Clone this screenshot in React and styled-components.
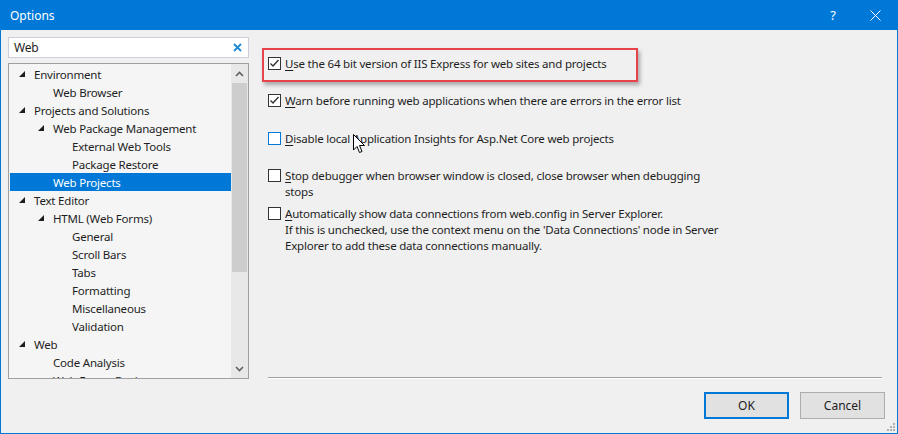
import styled, { createGlobalStyle } from 'styled-components'

const GlobalStyle = createGlobalStyle`
    html, body {
        margin: 0;
        padding: 0;
        background: #f0f0f0;
    }
    * {
        box-sizing: border-box;
    }
`

const Window = styled.div`
    width: 898px;
    height: 434px;
    display: flex;
    flex-direction: column;
    border: 1px solid #0078d7;
    border-top: none;
    background: #f0f0f0;
    font-family: 'Noto Sans', 'Open Sans', sans-serif;
    font-size: 11.5px;
    letter-spacing: -0.2px;
    color: #1e1e1e;
    position: relative;
    overflow: hidden;
`

const TitleBar = styled.div`
    height: 30px;
    margin: 0 -1px;
    background: #0078d7;
    color: white;
    display: flex;
    align-items: center;
    padding-left: 10px;
    padding-right: 5px;
`

const Title = styled.div`
    flex: 1;
    font-size: 12px;
    letter-spacing: 0;
`

const TitleButton = styled.div`
    width: 36px;
    height: 30px;
    margin-right: ${(p) => p.$space || 0}px;
    display: flex;
    align-items: center;
    justify-content: center;
    font-size: 13px;
`

const Content = styled.div`
    flex: 1;
    display: flex;
    flex-direction: column;
    padding: 7px 12px 0 7px;
`

const Main = styled.div`
    display: flex;
    height: 342px;
`

const LeftPanel = styled.div`
    width: 241px;
    display: flex;
    flex-direction: column;
    gap: 5px;
`

const SearchBox = styled.div`
    height: 21px;
    border: 1px solid #cccedb;
    background: white;
    display: flex;
    align-items: center;
    padding: 0 6px 0 5px;
    font-size: 12px;
`

const SearchText = styled.div`
    flex: 1;
`

const Tree = styled.div`
    flex: 1;
    border: 1px solid #a0a0a0;
    background: #f5f5f5;
    display: flex;
    overflow: hidden;
`

const TreeList = styled.div`
    flex: 1;
    padding: 1px 0 0 1px;
    overflow: hidden;
`

const TreeRow = styled.div`
    height: 18px;
    display: flex;
    align-items: center;
    padding-left: ${(p) => 9 + (p.$level - 1) * 19}px;
    background: ${(p) => (p.$selected ? '#0078d7' : 'transparent')};
    color: ${(p) => (p.$selected ? 'white' : '#1e1e1e')};
    white-space: nowrap;
`

const Expander = styled.div`
    width: 15px;
    height: 18px;
    display: flex;
    align-items: center;
    padding-bottom: 1px;
`

const ScrollBar = styled.div`
    width: 17px;
    background: #e8e8e8;
    display: flex;
    flex-direction: column;
    align-items: center;
`

const ScrollArrow = styled.div`
    height: 19px;
    width: 100%;
    display: flex;
    align-items: center;
    justify-content: center;
`

const ScrollTrack = styled.div`
    flex: 1;
    width: 100%;
`

const ScrollThumb = styled.div`
    height: 189px;
    margin: 0 1px;
    background: #cdcdcd;
`

const RightPanel = styled.div`
    flex: 1;
    margin-left: 19px;
    display: flex;
    flex-direction: column;
`

const Options = styled.div`
    flex: 1;
    padding-top: 19px;
    display: flex;
    flex-direction: column;
`

const OptionRow = styled.div`
    position: relative;
    display: flex;
    align-items: flex-start;
    margin-top: ${(p) => p.$gap}px;
    line-height: 16px;
`

const CheckBox = styled.div`
    width: 13px;
    height: 13px;
    margin-top: 1px;
    margin-right: 4px;
    flex-shrink: 0;
    border: 1px solid ${(p) => (p.$focus ? '#0078d7' : '#333333')};
    background: white;
    display: flex;
    align-items: center;
    justify-content: center;
`

const Label = styled.div`
    max-width: ${(p) => p.$width}px;
`

const Key = styled.span`
    text-decoration: underline;
    text-underline-offset: 2px;
`

const Highlight = styled.div`
    position: absolute;
    left: -6px;
    top: -8px;
    width: 376px;
    height: 34px;
    border: 2px solid #e8434b;
    box-shadow: 2px 3px 4px rgba(0, 0, 0, 0.3);
    pointer-events: none;
`

const Separator = styled.div`
    height: 2px;
    margin-right: 3px;
    border-top: 1px solid #a0a0a0;
    border-bottom: 1px solid #ffffff;
`

const Footer = styled.div`
    display: flex;
    justify-content: flex-end;
    gap: 11px;
    padding-top: 13px;
`

const Button = styled.div`
    width: 85px;
    height: 27px;
    display: flex;
    align-items: center;
    justify-content: center;
    font-size: 12px;
    letter-spacing: 0;
    background: #e1e1e1;
    border: ${(p) => (p.$default ? '2px solid #0078d7' : '1px solid #adadad')};
`

const Cursor = styled.svg`
    position: absolute;
    left: 352px;
    top: 134px;
`

const Grip = styled.svg`
    position: absolute;
    right: 2px;
    bottom: 2px;
`

const Triangle = () => (
    <svg width="6" height="6" viewBox="0 0 6 6">
        <polygon points="6,0 6,6 0,6" fill="#1e1e1e" />
    </svg>
)

const Check = () => (
    <svg width="11" height="11" viewBox="0 0 11 11">
        <polyline points="1.5,5.5 4,8 9.5,2" fill="none" stroke="#333" strokeWidth="1.4" />
    </svg>
)

const treeItems = [
    { label: 'Environment', level: 1, open: true },
    { label: 'Web Browser', level: 2 },
    { label: 'Projects and Solutions', level: 1, open: true },
    { label: 'Web Package Management', level: 2, open: true },
    { label: 'External Web Tools', level: 3 },
    { label: 'Package Restore', level: 3 },
    { label: 'Web Projects', level: 2, selected: true },
    { label: 'Text Editor', level: 1, open: true },
    { label: 'HTML (Web Forms)', level: 2, open: true },
    { label: 'General', level: 3 },
    { label: 'Scroll Bars', level: 3 },
    { label: 'Tabs', level: 3 },
    { label: 'Formatting', level: 3 },
    { label: 'Miscellaneous', level: 3 },
    { label: 'Validation', level: 3 },
    { label: 'Web', level: 1, open: true },
    { label: 'Code Analysis', level: 2 },
    { label: 'Web Forms Designer', level: 2 },
]

const options = [
    {
        key: 'U',
        rest: 'se the 64 bit version of IIS Express for web sites and projects',
        checked: true,
        gap: 0,
        width: 460,
        highlight: true,
    },
    {
        key: 'W',
        rest: 'arn before running web applications when there are errors in the error list',
        checked: true,
        gap: 21,
        width: 460,
    },
    {
        key: 'D',
        rest: 'isable local Application Insights for Asp.Net Core web projects',
        focus: true,
        gap: 22,
        width: 460,
    },
    {
        key: 'S',
        rest: 'top debugger when browser window is closed, close browser when debugging stops',
        gap: 21,
        width: 428,
    },
    {
        key: 'A',
        rest: 'utomatically show data connections from web.config in Server Explorer.',
        extra: "If this is unchecked, use the context menu on the 'Data Connections' node in Server Explorer to add these data connections manually.",
        gap: 6,
        width: 462,
    },
]

const App = () => {
    return (
        <Window>
            <GlobalStyle />
            <TitleBar>
                <Title>Options</Title>
                <TitleButton $space={6}>?</TitleButton>
                <TitleButton>
                    <svg width="11" height="11" viewBox="0 0 11 11">
                        <path d="M0.5 0.5 L10.5 10.5 M10.5 0.5 L0.5 10.5" stroke="white" strokeWidth="1" />
                    </svg>
                </TitleButton>
            </TitleBar>
            <Content>
                <Main>
                    <LeftPanel>
                        <SearchBox>
                            <SearchText>Web</SearchText>
                            <svg width="9" height="9" viewBox="0 0 9 9">
                                <path d="M1 1 L8 8 M8 1 L1 8" stroke="#1e88d8" strokeWidth="1.8" />
                            </svg>
                        </SearchBox>
                        <Tree>
                            <TreeList>
                                {treeItems.map((item) => (
                                    <TreeRow key={item.label} $level={item.level} $selected={item.selected}>
                                        <Expander>{item.open && <Triangle />}</Expander>
                                        {item.label}
                                    </TreeRow>
                                ))}
                            </TreeList>
                            <ScrollBar>
                                <ScrollArrow>
                                    <svg width="9" height="6" viewBox="0 0 9 6">
                                        <polyline points="1,5 4.5,1.5 8,5" fill="none" stroke="#606060" strokeWidth="1.6" />
                                    </svg>
                                </ScrollArrow>
                                <ScrollTrack>
                                    <ScrollThumb />
                                </ScrollTrack>
                                <ScrollArrow>
                                    <svg width="9" height="6" viewBox="0 0 9 6">
                                        <polyline points="1,1 4.5,4.5 8,1" fill="none" stroke="#606060" strokeWidth="1.6" />
                                    </svg>
                                </ScrollArrow>
                            </ScrollBar>
                        </Tree>
                    </LeftPanel>
                    <RightPanel>
                        <Options>
                            {options.map((opt) => (
                                <OptionRow key={opt.key} $gap={opt.gap}>
                                    {opt.highlight && <Highlight />}
                                    <CheckBox $focus={opt.focus}>{opt.checked && <Check />}</CheckBox>
                                    <Label $width={opt.width}>
                                        <Key>{opt.key}</Key>
                                        {opt.rest}
                                        {opt.extra && <div>{opt.extra}</div>}
                                    </Label>
                                </OptionRow>
                            ))}
                        </Options>
                        <Separator />
                    </RightPanel>
                </Main>
                <Footer>
                    <Button $default>OK</Button>
                    <Button>Cancel</Button>
                </Footer>
            </Content>
            <Cursor width="13" height="20" viewBox="0 0 13 20">
                <path d="M0.5 0.5 L0.5 16 L4 12.5 L6.5 18.5 L9 17.5 L6.5 11.5 L11.5 11.5 Z" fill="white" stroke="black" strokeWidth="1" />
            </Cursor>
            <Grip width="8" height="8" viewBox="0 0 8 8">
                <rect x="6" y="0" width="2" height="2" fill="#b0b0b0" />
                <rect x="3" y="3" width="2" height="2" fill="#b0b0b0" />
                <rect x="6" y="3" width="2" height="2" fill="#b0b0b0" />
                <rect x="0" y="6" width="2" height="2" fill="#b0b0b0" />
                <rect x="3" y="6" width="2" height="2" fill="#b0b0b0" />
                <rect x="6" y="6" width="2" height="2" fill="#b0b0b0" />
            </Grip>
        </Window>
    )
}

export default App
